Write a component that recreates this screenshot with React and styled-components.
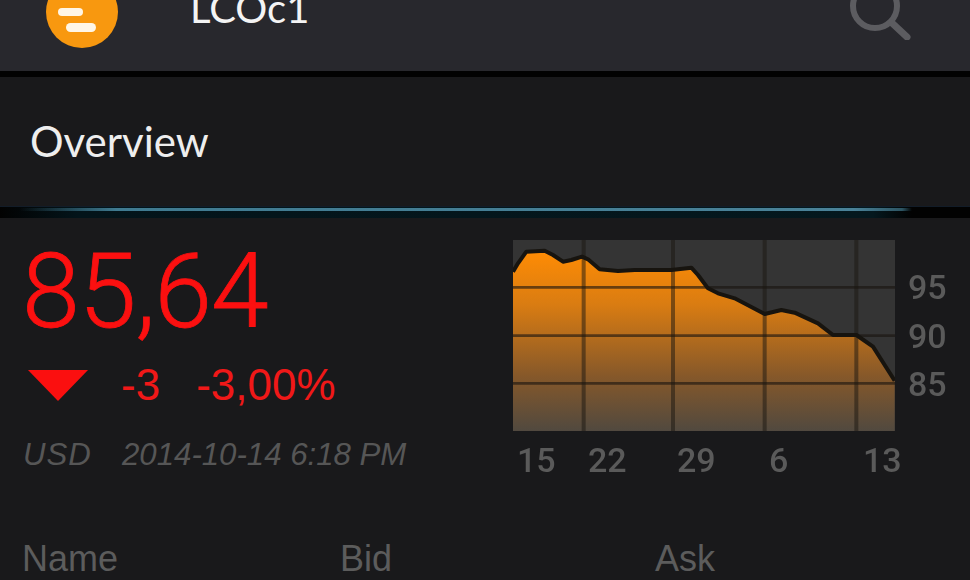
import React from "react"
import styled, { createGlobalStyle } from "styled-components"

const GlobalStyle = createGlobalStyle`
  html, body {
    margin: 0;
    padding: 0;
    width: 970px;
    height: 580px;
    overflow: hidden;
    background: #19191b;
  }
`

const Screen = styled.div`
  width: 970px;
  height: 604px;
  margin-top: -24px;
  background: #19191b;
  overflow: hidden;
  font-family: "Liberation Sans", Roboto, sans-serif;
`

const Header = styled.header`
  height: 95px;
  display: flex;
  align-items: flex-start;
  background: #28282d;
  border-bottom: 6px solid #020202;
`

const Logo = styled.svg`
  width: 72px;
  height: 72px;
  margin-left: 46px;
  flex: none;
`

const Symbol = styled.h1`
  margin: 8px 0 0 72px;
  flex: 1;
  font-family: Lato, sans-serif;
  font-weight: 400;
  font-size: 40px;
  line-height: 48px;
  color: #f4f4f4;
`

const SearchIcon = styled.svg`
  width: 64px;
  height: 64px;
  margin: 0 56px 0 0;
  flex: none;
`

const TabBar = styled.div`
  height: 129px;
  display: flex;
  align-items: center;
  padding: 0 0 1px 30px;
  box-sizing: border-box;
`

const TabLabel = styled.span`
  font-family: Lato, sans-serif;
  font-weight: 400;
  font-size: 42px;
  color: #eeeeee;
`

const Divider = styled.div`
  height: 12px;
  background: linear-gradient(90deg, #020202 0%, #03141a 8%, #04181e 90%, #020202 94%);
  border-top: 1px solid #121c28;
  box-sizing: border-box;

  &::before {
    content: "";
    display: block;
    height: 3px;
    margin-top: 1px;
    background: linear-gradient(90deg, transparent 2%, #3f7a90 12%, #4a8298 88%, #2d5563 93%, transparent 94%);
  }
`

const Main = styled.main`
  display: flex;
  justify-content: space-between;
  padding: 22px 0 0 22px;
`

const Quote = styled.div`
  padding-top: 2px;
`

const Price = styled.div`
  font-family: Roboto, sans-serif;
  font-weight: 300;
  font-size: 104px;
  line-height: 100px;
  color: #fb1010;
  letter-spacing: -1px;
  -webkit-text-stroke: 0.8px #fb1010;
`

const ChangeRow = styled.div`
  display: flex;
  align-items: center;
  margin-top: 18px;
  height: 50px;
  font-size: 44px;
  color: #f01818;
`

const Triangle = styled.span`
  width: 0;
  height: 0;
  margin: 0 33px 0 6px;
  border-left: 30px solid transparent;
  border-right: 30px solid transparent;
  border-top: 31px solid #fb0f0f;
`

const ChangeValue = styled.span`
  margin-right: 36px;
`

const Stamp = styled.div`
  display: flex;
  margin-top: 25px;
  font-size: 31.2px;
  line-height: 40px;
  font-style: italic;
  color: #565656;
`

const Currency = styled.span`
  width: 100px;
  padding-left: 1px;
  letter-spacing: 1px;
  box-sizing: border-box;
`

const ChartBlock = styled.div`
  width: 457px;
  display: grid;
  grid-template-columns: 382px 1fr;
  font-family: Roboto, sans-serif;
  filter: blur(0.5px);
`

const ChartSvg = styled.svg`
  display: block;
  width: 382px;
  height: 191px;
`

const YAxis = styled.div`
  display: flex;
  flex-direction: column;
  padding: 23px 0 0 13px;
  font-size: 34px;
  line-height: 48.5px;
  font-weight: 500;
  color: #5a5a5a;
`

const XAxis = styled.div`
  grid-column: 1 / 3;
  display: grid;
  grid-template-columns: 71px 89px 92px 94px auto;
  padding: 7px 0 0 4px;
  font-size: 34px;
  line-height: 44px;
  font-weight: 500;
  color: #5a5a5a;
`

const TableHead = styled.div`
  display: grid;
  grid-template-columns: 318px 315px auto;
  padding: 57px 0 0 22px;
  font-size: 36px;
  line-height: 40px;
  color: #5c5c5c;
`

const line = "85,155 100,130 125,95 180,92 205,105 235,125 260,120 292,110 310,118 345,148 400,153 450,150 560,150 620,143 640,165 670,205 700,220 750,235 840,282 890,270 930,278 1000,310 1045,345 1115,345 1165,380 1200,435 1230,482"

function Chart() {
  return (
    <ChartSvg viewBox="85 60 1146 573" preserveAspectRatio="none">
      <defs>
        <linearGradient id="fill" x1="0" y1="0" x2="0" y2="1">
          <stop offset="0" stopColor="#ff8c04" />
          <stop offset="0.3" stopColor="#d97c12" />
          <stop offset="0.7" stopColor="#85582a" />
          <stop offset="1" stopColor="#51493f" />
        </linearGradient>
      </defs>
      <rect x="85" y="60" width="1146" height="573" fill="#343434" />
      <polygon points={`${line} 1230,633 85,633`} fill="url(#fill)" />
      {[202, 347, 490].map(y => (
        <line key={y} x1="85" x2="1231" y1={y} y2={y} stroke="#1a1510" strokeOpacity="0.62" strokeWidth="8" />
      ))}
      {[297, 565, 840, 1115].map(x => (
        <line key={x} x1={x} x2={x} y1="60" y2="633" stroke="#1a1510" strokeOpacity="0.5" strokeWidth="12" />
      ))}
      <polyline points={line} fill="none" stroke="#17140f" strokeWidth="12" strokeLinejoin="round" />
    </ChartSvg>
  )
}

export default function App() {
  return (
    <Screen>
      <GlobalStyle />
      <Header>
        <Logo viewBox="0 0 72 72">
          <circle cx="36" cy="36" r="36" fill="#f8980f" />
          <rect x="20" y="13" width="22" height="8" rx="4" fill="#fff6e6" />
          <rect x="12" y="32" width="25" height="8" rx="4" fill="#fff6e6" />
          <rect x="20" y="47" width="30" height="9" rx="4.5" fill="#fff6e6" />
        </Logo>
        <Symbol>LCOc1</Symbol>
        <SearchIcon viewBox="0 0 64 64" fill="none" stroke="#5c5c60" strokeWidth="6" strokeLinecap="round">
          <circle cx="25" cy="30" r="22" />
          <path d="M42 47 L57 61" strokeWidth="7" />
        </SearchIcon>
      </Header>
      <TabBar>
        <TabLabel>Overview</TabLabel>
      </TabBar>
      <Divider />
      <Main>
        <Quote>
          <Price>85,64</Price>
          <ChangeRow>
            <Triangle />
            <ChangeValue>-3</ChangeValue>
            <span>-3,00%</span>
          </ChangeRow>
          <Stamp>
            <Currency>USD</Currency>
            <span>2014-10-14 6:18 PM</span>
          </Stamp>
        </Quote>
        <ChartBlock>
          <Chart />
          <YAxis>
            <span>95</span>
            <span>90</span>
            <span>85</span>
          </YAxis>
          <XAxis>
            <span>15</span>
            <span>22</span>
            <span>29</span>
            <span>6</span>
            <span>13</span>
          </XAxis>
        </ChartBlock>
      </Main>
      <TableHead>
        <span>Name</span>
        <span>Bid</span>
        <span>Ask</span>
      </TableHead>
    </Screen>
  )
}
